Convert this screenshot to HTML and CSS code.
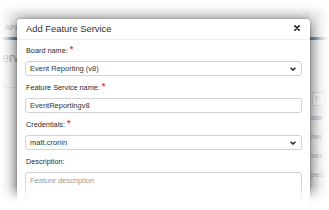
FILE: index.html
```html
<!DOCTYPE html>
<html>
<head>
<meta charset="utf-8">
<link rel="stylesheet" href="styles.css">
</head>
<body>
<div class="scene">
  <div class="bg">
    <div class="bg-left">
      <div class="bg-nav"><span>API</span></div>
      <div class="bg-tab"></div>
      <div class="bg-title"><span>erv</span></div>
      <div class="bg-rule"></div>
    </div>
    <div class="bg-mid"></div>
    <div class="bg-right">
      <div class="bg-nav"></div>
      <div class="bg-tab"></div>
      <div class="bg-box">F</div>
      <div class="bg-list">
        <span class="bg-link">oor</span>
        <span>hei</span>
        <span>ver</span>
        <span>pec</span>
      </div>
    </div>
  </div>

  <div class="modal">
    <div class="modal-header">
      <span class="modal-title">Add Feature Service</span>
      <svg class="close" width="6" height="6" viewBox="0 0 6 6"><path d="M0.9 0.9 L5.1 5.1 M5.1 0.9 L0.9 5.1" stroke="#1a1a1a" stroke-width="1.5" stroke-linecap="round"/></svg>
    </div>
    <div class="modal-body">
      <div class="group">
        <div class="label">Board name: <span class="req">*</span></div>
        <div class="field select"><span>Event Reporting (v8)</span><svg width="6" height="4" viewBox="0 0 6 4"><path d="M0.6 0.7 L3 3.1 L5.4 0.7" fill="none" stroke="#222" stroke-width="1.4"/></svg></div>
      </div>
      <div class="group">
        <div class="label">Feature Service name: <span class="req">*</span></div>
        <div class="field"><span>EventReportingv8</span></div>
      </div>
      <div class="group">
        <div class="label">Credentials: <span class="req">*</span></div>
        <div class="field select"><span>matt.cronin</span><svg width="6" height="4" viewBox="0 0 6 4"><path d="M0.6 0.7 L3 3.1 L5.4 0.7" fill="none" stroke="#222" stroke-width="1.4"/></svg></div>
      </div>
      <div class="group">
        <div class="label">Description:</div>
        <div class="field area"><span class="placeholder">Feature description</span></div>
      </div>
    </div>
  </div>

  <div class="vignette"></div>
</div>
</body>
</html>
```

FILE: styles.css
```css
html, body {
  margin: 0;
  padding: 0;
  background: #fff;
}
body {
  font-family: "Liberation Sans", Arial, sans-serif;
  color: #333;
  overflow: hidden;
}
.scene {
  position: relative;
  width: 329px;
  height: 210px;
  overflow: hidden;
  background: #fff;
}
.bg {
  display: grid;
  grid-template-columns: 17px 1fr 19px;
  height: 210px;
  background: #e6e6e6;
}
.bg-left, .bg-right {
  display: flex;
  flex-direction: column;
  background: #ececec;
}
.bg-right {
  overflow: hidden;
}
.bg-nav {
  height: 37px;
  display: flex;
  align-items: flex-end;
  justify-content: flex-end;
  padding-bottom: 5px;
  box-sizing: border-box;
  font-size: 7.5px;
  color: #a0a0a0;
  white-space: nowrap;
}
.bg-tab {
  height: 3px;
  background: linear-gradient(to right, #b7c9d8, #4f82ab);
}
.bg-right .bg-tab {
  background: linear-gradient(to right, #4f82ab, #c4d3df);
}
.bg-title {
  height: 30px;
  display: flex;
  align-items: center;
  padding-left: 2px;
  font-size: 12.5px;
  color: #9c9c9c;
  white-space: nowrap;
  margin-top: 3px;
}
.bg-rule {
  margin-top: 14px;
  border-bottom: 1px solid #d8d8d8;
}
.bg-box {
  margin: 52px 4px 0 2px;
  height: 12px;
  border: 1px solid #d4d4d4;
  background: #f2f2f2;
  font-size: 7px;
  color: #c8c8c8;
  padding-left: 2px;
  line-height: 12px;
}
.bg-list {
  display: flex;
  flex-direction: column;
  gap: 7px;
  margin-top: 6px;
  padding-left: 1px;
  font-size: 8px;
  line-height: 12px;
  color: #a8a8a8;
  white-space: nowrap;
}
.bg-link {
  color: #7c9cbc;
}

.modal {
  position: absolute;
  left: 17px;
  top: 19px;
  width: 293px;
  height: 200px;
  background: #fff;
  border-radius: 3px 3px 0 0;
  box-shadow: 0 3px 14px rgba(0, 0, 0, 0.6), 0 0 3px rgba(0, 0, 0, 0.3);
}
.modal-header {
  display: flex;
  align-items: center;
  justify-content: space-between;
  padding: 3px 10px 4px 9px;
  border-bottom: 1px solid #ececec;
  height: 13px;
}
.modal-title {
  font-size: 9.4px;
  line-height: 13px;
  color: #333;
}
.close {
  display: block;
  margin-top: -1px;
}
.modal-body {
  padding: 5px 8px 0;
  display: flex;
  flex-direction: column;
  gap: 6px;
}
.group {
  display: flex;
  flex-direction: column;
  gap: 4px;
}
.label {
  font-size: 7.3px;
  line-height: 12px;
  height: 12px;
  padding-left: 1px;
  color: #2b2b2b;
  white-space: nowrap;
}
.req {
  color: #e8413c;
  font-size: 9px;
  font-weight: bold;
  vertical-align: top;
  line-height: 9px;
}
.field {
  height: 15px;
  box-sizing: border-box;
  border: 1px solid #d2d2d2;
  border-radius: 3px;
  padding: 0 5px 0 4px;
  display: flex;
  align-items: center;
  justify-content: space-between;
  font-size: 7.5px;
  color: #333;
  white-space: nowrap;
}
.field svg {
  display: block;
}
.area {
  height: 40px;
  align-items: flex-start;
  padding-top: 3px;
}
.placeholder {
  color: #9a9a9a;
}

.vignette {
  position: absolute;
  inset: 0;
  pointer-events: none;
  background:
    linear-gradient(to bottom, #fff 0, rgba(255,255,255,0.9) 5px, rgba(255,255,255,0) 15px, rgba(255,255,255,0) 186px, rgba(255,255,255,0.85) 198px, #fff 205px),
    linear-gradient(to right, #fff 0, rgba(255,255,255,0) 12px, rgba(255,255,255,0) 316px, #fff 329px);
}
```
